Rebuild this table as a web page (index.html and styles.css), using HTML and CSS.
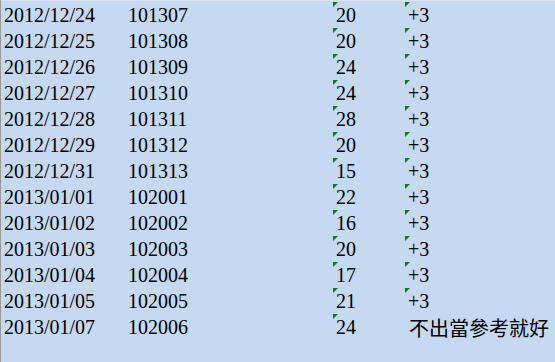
FILE: index.html
```html
<!DOCTYPE html>
<html>
<head>
<meta charset="utf-8">
<link rel="stylesheet" href="styles.css">
</head>
<body>
<div class="sheet">
  <div class="topline"></div>
  <div class="row"><div class="c a">2012/12/24</div><div class="c b">101307</div><div class="c n tri">20</div><div class="c d tri">+3</div></div>
  <div class="row"><div class="c a">2012/12/25</div><div class="c b">101308</div><div class="c n tri">20</div><div class="c d tri">+3</div></div>
  <div class="row"><div class="c a">2012/12/26</div><div class="c b">101309</div><div class="c n tri">24</div><div class="c d tri">+3</div></div>
  <div class="row"><div class="c a">2012/12/27</div><div class="c b">101310</div><div class="c n tri">24</div><div class="c d tri">+3</div></div>
  <div class="row"><div class="c a">2012/12/28</div><div class="c b">101311</div><div class="c n tri">28</div><div class="c d tri">+3</div></div>
  <div class="row"><div class="c a">2012/12/29</div><div class="c b">101312</div><div class="c n tri">20</div><div class="c d tri">+3</div></div>
  <div class="row"><div class="c a">2012/12/31</div><div class="c b">101313</div><div class="c n tri">15</div><div class="c d tri">+3</div></div>
  <div class="row"><div class="c a">2013/01/01</div><div class="c b">102001</div><div class="c n tri">22</div><div class="c d tri">+3</div></div>
  <div class="row"><div class="c a">2013/01/02</div><div class="c b">102002</div><div class="c n tri">16</div><div class="c d tri">+3</div></div>
  <div class="row"><div class="c a">2013/01/03</div><div class="c b">102003</div><div class="c n tri">20</div><div class="c d tri">+3</div></div>
  <div class="row"><div class="c a">2013/01/04</div><div class="c b">102004</div><div class="c n tri">17</div><div class="c d tri">+3</div></div>
  <div class="row"><div class="c a">2013/01/05</div><div class="c b">102005</div><div class="c n tri">21</div><div class="c d tri">+3</div></div>
  <div class="row"><div class="c a">2013/01/07</div><div class="c b">102006</div><div class="c n tri">24</div><div class="c d cjk">不出當參考就好</div></div>
</div>
</body>
</html>
```
FILE: styles.css
```css
html, body {
  margin: 0;
  padding: 0;
  background: #c5d9f1;
}
.sheet {
  width: 555px;
  height: 362px;
  box-sizing: border-box;
  border-left: 1px solid #9a9a9a;
  background: #c5d9f1;
  font-family: "Liberation Serif", "Times New Roman", serif;
  font-size: 20px;
  color: #000;
  overflow: hidden;
}
.topline {
  height: 1px;
  background: #d8e4f4;
}
.row {
  display: grid;
  grid-template-columns: 124px 208px 72px 150px;
  height: 26px;
}
.c {
  position: relative;
  padding-top: 3px;
  padding-left: 3px;
  line-height: 23px;
  white-space: nowrap;
}
.tri::before {
  content: "";
  position: absolute;
  left: 0;
  top: 1px;
  width: 0;
  height: 0;
  border-top: 5px solid #0a7d0a;
  border-right: 5px solid transparent;
}
.cjk {
  font-family: "Noto Sans CJK TC", "Liberation Serif", sans-serif;
  font-size: 20px;
  letter-spacing: 0;
  padding-left: 4px;
}
```
